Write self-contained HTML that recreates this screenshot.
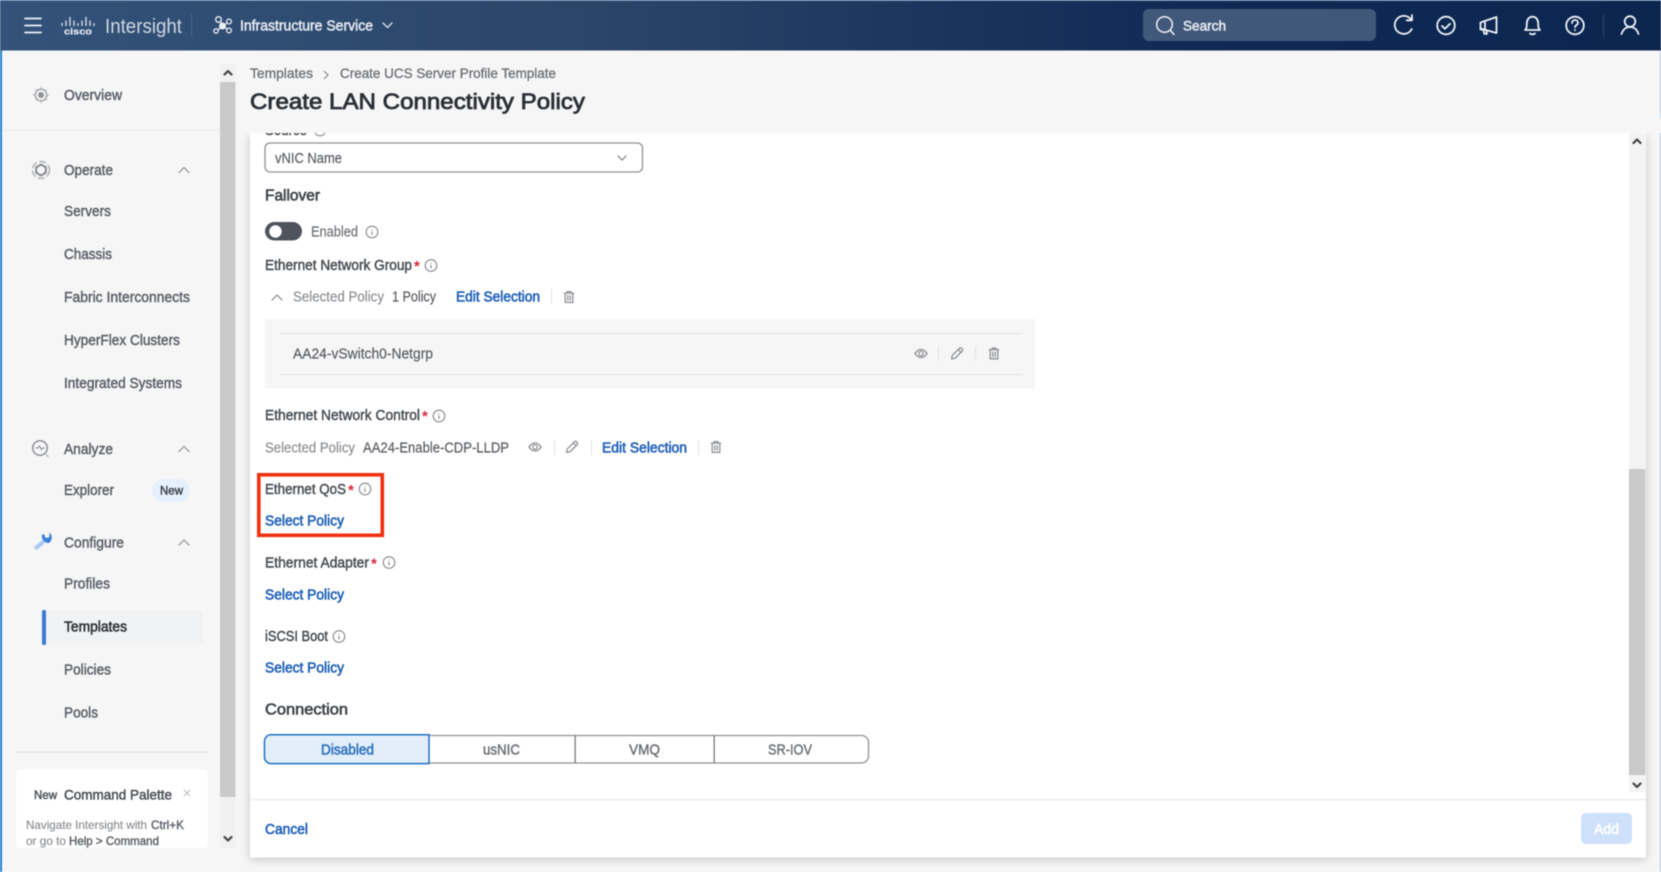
<!DOCTYPE html>
<html lang="en">
<head>
<meta charset="utf-8">
<title>Create LAN Connectivity Policy</title>
<style>
html,body{margin:0;padding:0;background:#f6f6f6;width:1661px;height:872px;overflow:hidden}
svg{display:block;filter:blur(.45px)}
text{font-family:"Liberation Sans",sans-serif;font-size:14.5px;fill:#4d5258;stroke:#4d5258;stroke-width:.45px}
.side{fill:#5b6067;stroke:#5b6067}
.lbl{fill:#474c52;stroke:#474c52}
.mut{fill:#85898e;stroke:#85898e;stroke-width:.12px}
.reg{fill:#55595f;stroke:#55595f;stroke-width:.15px}
.lnk{fill:#1f60b8;stroke:#1f60b8;stroke-width:.6px}
.h{font-size:15.5px;fill:#3d4248;stroke:#3d4248;stroke-width:.6px}
.ic{fill:none;stroke:#85898e;stroke-width:1.2;stroke-linecap:round;stroke-linejoin:round}
.wh{fill:none;stroke:#eef2f7;stroke-width:1.8;stroke-linecap:round;stroke-linejoin:round}
.star{fill:#d8263c;stroke:none;font-size:15px;font-weight:700}
.small{font-size:12px;fill:#85898e;stroke:#85898e;stroke-width:.1px}
.smallb{font-size:12px;fill:#5b6067;stroke:#5b6067;stroke-width:.4px}
</style>
</head>
<body>
<svg xmlns="http://www.w3.org/2000/svg" width="1661" height="872" viewBox="0 0 1661 872">
<defs>
<linearGradient id="hdr" x1="0" x2="1" y1="0" y2="0">
<stop offset="0" stop-color="#34527a"/><stop offset=".35" stop-color="#2a4669"/><stop offset=".72" stop-color="#0f2a55"/><stop offset="1" stop-color="#0c2650"/>
</linearGradient>
<symbol id="info" viewBox="0 0 14 14" overflow="visible">
<circle cx="7" cy="7" r="5.8" fill="none" stroke="#85898e" stroke-width="1.1"/>
<path d="M7 6.2V10M7 4.1v.9" fill="none" stroke="#85898e" stroke-width="1.1"/>
</symbol>
<symbol id="trash" viewBox="0 0 14 14" overflow="visible">
<path class="ic" d="M2.2 3.2h9.6M5 3V1.6h4V3M3.2 3.4v9h7.6v-9M5.8 5.6v4.6M8.2 5.6v4.6"/>
</symbol>
<symbol id="eye" viewBox="0 0 14 14" overflow="visible">
<path class="ic" d="M1 7c2-3 4-4 6-4s4 1 6 4c-2 3-4 4-6 4s-4-1-6-4z"/><circle class="ic" cx="7" cy="7" r="2.2"/>
</symbol>
<symbol id="pen" viewBox="0 0 14 14" overflow="visible">
<path class="ic" d="M1.6 12.4l.6-3.4L9.4 1.8c.6-.6 1.400-.6 2 0l.8.8c.6.6.6 1.400 0 2L5 11.800zM8.200 3l2.800 2.800"/>
</symbol>
</defs>

<!-- page -->
<rect width="1661" height="872" fill="#f6f6f6"/>
<rect x="0" y="50" width="2" height="822" fill="#1f80cf"/>
<rect x="1660" y="50" width="1" height="822" fill="#a9c9e6"/>

<!-- header -->
<rect width="1661" height="50.500" fill="url(#hdr)"/>
<rect width="1661" height="1" fill="#5f7fa6"/>
<path class="wh" stroke-width="2" d="M25 18.500h16M25 25.500h16M25 32.500h16"/>
<g stroke="#dfe6ef" stroke-width="1.300" stroke-linecap="round">
<path d="M62 23.500v2M66 21v4.500M70 17.500v8M74 21v4.500M78 23.500v2M82 21v4.500M86 17.500v8M90 21v4.500M94 23.500v2"/>
</g>
<text x="64" y="34.500" textLength="28" lengthAdjust="spacingAndGlyphs" style="font-size:9.500px;fill:#e3e9f1;stroke:#e3e9f1;stroke-width:.2px;font-weight:700">cisco</text>
<text x="105" y="33" textLength="77" lengthAdjust="spacingAndGlyphs" style="font-size:20.500px;fill:#cfd8e4;stroke:none">Intersight</text>
<rect x="191" y="14" width="1" height="22" fill="#4c6688"/>
<g fill="none" stroke="#eef2f7" stroke-width="1.300">
<path d="M219 20l4 5M229 22l-5 3M229 30l-5-3M217 31l4-4"/>
<circle cx="218.500" cy="19.500" r="2.800" fill="#2f4c70"/><circle cx="229" cy="21.500" r="2.400" fill="#2f4c70"/><circle cx="229" cy="30.500" r="2.400" fill="#2f4c70"/><circle cx="216" cy="31" r="2.200" fill="#2f4c70"/><circle cx="222.500" cy="26" r="2.800" fill="#eef2f7"/>
</g>
<text x="240" y="30.500" textLength="133" lengthAdjust="spacingAndGlyphs" style="font-size:14.500px;fill:#e6ebf2;stroke:#e6ebf2;stroke-width:.5px">Infrastructure Service</text>
<path d="M383 23l4.500 4.500 4.500-4.500" fill="none" stroke="#dfe6ef" stroke-width="1.300" stroke-linecap="round" stroke-linejoin="round"/>

<rect x="1143" y="9" width="233" height="32" rx="6" fill="#42587a"/>
<circle cx="1164.500" cy="24.500" r="7.800" fill="none" stroke="#eef2f7" stroke-width="1.500"/>
<path d="M1170.500 30.500l3.500 4" stroke="#eef2f7" stroke-width="1.500" stroke-linecap="round"/>
<text x="1183" y="30.500" textLength="43" lengthAdjust="spacingAndGlyphs" style="fill:#e6ebf2;stroke:#e6ebf2;stroke-width:.55px;font-size:14px">Search</text>
<!-- refresh -->
<path class="wh" d="M1411 19.500a9 9 0 1 0 .8 9.500M1412 15v5.300h-5.300"/>
<!-- check -->
<circle class="wh" stroke-width="1.500" cx="1446" cy="25.500" r="8.800"/>
<path class="wh" stroke-width="1.600" d="M1442 26l3 2.800 5-5"/>
<!-- megaphone -->
<path class="wh" stroke-width="1.600" d="M1480.500 22.500l16-5.500v16l-16-4.500zM1480.500 22.500v7l3 .3 .8 4h2.700l-.6-3.500"/>
<path class="wh" stroke-width="1.400" d="M1485 22.500v6"/>
<!-- bell -->
<path class="wh" stroke-width="1.600" d="M1525 30c1.800-1.600 1.800-3.500 1.800-6.500 0-3.800 2.200-6.800 5.700-6.800s5.700 3 5.700 6.800c0 3 0 4.900 1.800 6.500zM1530 33.500c1 1.200 4 1.200 5 0"/>
<!-- help -->
<circle class="wh" stroke-width="1.500" cx="1575" cy="25.500" r="8.800"/>
<path class="wh" stroke-width="1.500" d="M1572 23c.2-4 6-4 6 0 0 2-3 2-3 4.200M1575 30v.2"/>
<rect x="1603" y="14" width="1" height="23" fill="#2b4569"/>
<!-- user -->
<circle class="wh" stroke-width="1.700" cx="1630" cy="21.500" r="5.300"/>
<path class="wh" stroke-width="1.700" d="M1621.500 34c1.500-4.500 4.500-7 8.500-7s7 2.500 8.500 7"/>

<!-- sidebar scrollbar -->
<rect x="220" y="64" width="15.500" height="784" fill="#f1f1f1"/>
<rect x="220" y="82" width="15.500" height="715" fill="#c9c9c9"/>
<path d="M224.500 74.500l3.500-3.500 3.500 3.500M224.500 837l3.500 3.500 3.500-3.500" fill="none" stroke="#444" stroke-width="2.200" stroke-linecap="round" stroke-linejoin="round"/>

<!-- sidebar -->
<rect x="2" y="129.500" width="218" height="1.500" fill="#efefef"/>
<g fill="none" stroke="#9a9da1">
<circle cx="41" cy="95" r="3" fill="#8f9297" stroke="none"/><circle cx="41" cy="95" r="5.800" stroke-width="1.300"/>
<path d="M41 87v3M41 100v3M33 95h3M46 95h3M35.500 89.500l2 2M44.500 98.500l2 2M46.500 89.500l-2 2M37.500 98.500l-2 2" stroke-width="1.200" stroke="#b0b3b6"/>
<circle cx="41" cy="170" r="8.500" stroke-width="1.500" stroke-dasharray="7 2.500" stroke="#b0b3b6"/>
<path d="M41 164.500l4.800 2.800v5.400l-4.800 2.800-4.800-2.800v-5.400z" stroke="#85888d" stroke-width="2"/>
<circle cx="40" cy="448" r="7.300" stroke="#85898e" stroke-width="1.400"/>
<path d="M35.500 448h2.500l1.500-2 2 3.500 1-1.500h2.500" stroke="#85898e" stroke-width="1"/>
<path d="M46 454.500l2.500 2.500" stroke="#b5b8bb" stroke-width="1.400"/>
</g>
<path d="M42 534.500a6.800 6.800 0 0 0 7 8.500 6.800 6.800 0 0 0 .5-10.500l-.2 4.700-3.800 .8-1-3.500z" fill="#3b7fdb"/>
<path d="M42.500 542.500l-6 5" stroke="#a9c8f0" stroke-width="4" stroke-linecap="round"/>
<text class="side" x="64" y="100" textLength="58" lengthAdjust="spacingAndGlyphs">Overview</text>
<text class="side" x="64" y="175" textLength="49" lengthAdjust="spacingAndGlyphs">Operate</text>
<text class="side" x="64" y="216" textLength="47" lengthAdjust="spacingAndGlyphs">Servers</text>
<text class="side" x="64" y="259" textLength="48" lengthAdjust="spacingAndGlyphs">Chassis</text>
<text class="side" x="64" y="302" textLength="126" lengthAdjust="spacingAndGlyphs">Fabric Interconnects</text>
<text class="side" x="64" y="345" textLength="116" lengthAdjust="spacingAndGlyphs">HyperFlex Clusters</text>
<text class="side" x="64" y="388" textLength="118" lengthAdjust="spacingAndGlyphs">Integrated Systems</text>
<text class="side" x="64" y="454" textLength="49" lengthAdjust="spacingAndGlyphs">Analyze</text>
<text class="side" x="64" y="495" textLength="50" lengthAdjust="spacingAndGlyphs">Explorer</text>
<text class="side" x="64" y="547.500" textLength="60" lengthAdjust="spacingAndGlyphs">Configure</text>
<text class="side" x="64" y="588.500" textLength="46" lengthAdjust="spacingAndGlyphs">Profiles</text>
<rect x="42" y="610" width="161" height="35" rx="3" fill="#f1f2f4"/>
<rect x="42" y="610" width="4" height="35" rx="1.500" fill="#3b7bd4"/>
<text x="64" y="631.500" textLength="63" lengthAdjust="spacingAndGlyphs" style="fill:#2c3137;stroke:#2c3137;stroke-width:.55px">Templates</text>
<text class="side" x="64" y="674.500" textLength="47" lengthAdjust="spacingAndGlyphs">Policies</text>
<text class="side" x="64" y="717.500" textLength="34" lengthAdjust="spacingAndGlyphs">Pools</text>
<path d="M179 172.500l5-5 5 5M179 451.500l5-5 5 5M179 545l5-5 5 5" fill="none" stroke="#9a9da1" stroke-width="1.300" stroke-linecap="round" stroke-linejoin="round"/>
<rect x="152" y="479" width="38" height="23" rx="11.500" fill="#e6f0fc"/>
<text x="160" y="494.500" textLength="23" lengthAdjust="spacingAndGlyphs" style="font-size:12px;fill:#3e444b;stroke:#3e444b">New</text>
<rect x="16" y="751.500" width="192" height="1.500" fill="#e6e6e6"/>
<rect x="16" y="769" width="192" height="79" rx="4" fill="#fff"/>
<text x="34" y="799" textLength="23" lengthAdjust="spacingAndGlyphs" style="font-size:12px;fill:#4d5258;stroke:#4d5258">New</text>
<text x="64" y="799.500" textLength="108" lengthAdjust="spacingAndGlyphs" style="font-size:14px;fill:#474c52;stroke:#474c52">Command Palette</text>
<path d="M184 790l6 6M190 790l-6 6" stroke="#bbbdc0" stroke-width="1.100"/>
<text class="small" x="26" y="829" textLength="121" lengthAdjust="spacingAndGlyphs">Navigate Intersight with</text>
<text class="smallb" x="151" y="829" textLength="33" lengthAdjust="spacingAndGlyphs">Ctrl+K</text>
<text class="small" x="26" y="845" textLength="40" lengthAdjust="spacingAndGlyphs">or go to</text>
<text class="smallb" x="69" y="845" textLength="90" lengthAdjust="spacingAndGlyphs">Help &gt; Command</text>

<!-- main panel -->
<rect x="250" y="133" width="1396" height="724.500" fill="#fff" style="filter:drop-shadow(0 2px 5px rgba(0,0,0,.2))"/>
<text class="lbl" x="265" y="135" textLength="42" lengthAdjust="spacingAndGlyphs">Source</text>
<use href="#info" x="313" y="123" width="14" height="14"/>
<rect x="238" y="118" width="1425" height="15" fill="#f6f6f6"/>

<!-- breadcrumb + title -->
<text x="250" y="78" textLength="63" lengthAdjust="spacingAndGlyphs" style="fill:#6b6f75;stroke:#6b6f75;stroke-width:.3px;font-size:14px">Templates</text>
<path d="M324 71l4 4-4 4" fill="none" stroke="#85898e" stroke-width="1.200"/>
<text x="340" y="78" textLength="216" lengthAdjust="spacingAndGlyphs" style="fill:#6b6f75;stroke:#6b6f75;stroke-width:.3px;font-size:14px">Create UCS Server Profile Template</text>
<text x="250" y="109" textLength="335" lengthAdjust="spacingAndGlyphs" style="font-size:22.500px;fill:#2b3036;stroke:#2b3036;stroke-width:.8px">Create LAN Connectivity Policy</text>

<!-- panel scrollbar -->
<rect x="1629" y="133" width="16.500" height="659" fill="#f3f3f3"/>
<rect x="1629" y="469" width="16.500" height="306" fill="#c9c9c9"/>
<path d="M1633.500 143l3.500-3.500 3.500 3.500M1633.500 783.500l3.500 3.500 3.500-3.500" fill="none" stroke="#444" stroke-width="2.200" stroke-linecap="round" stroke-linejoin="round"/>

<!-- form -->
<rect x="265" y="143" width="377.500" height="29" rx="5" fill="#fff" stroke="#8d9196" stroke-width="1.300"/>
<text class="reg" x="275" y="163" textLength="67" lengthAdjust="spacingAndGlyphs">vNIC Name</text>
<path d="M618 156l4 4 4-4" fill="none" stroke="#777b80" stroke-width="1.200" stroke-linecap="round" stroke-linejoin="round"/>

<text class="h" x="265" y="200.500" textLength="55" lengthAdjust="spacingAndGlyphs">Fallover</text>
<rect x="265" y="222" width="37" height="18.500" rx="9.250" fill="#4f545c"/>
<circle cx="275.500" cy="231.500" r="6.200" fill="#fff"/>
<text class="reg" x="311" y="236.500" textLength="47" lengthAdjust="spacingAndGlyphs" style="fill:#6b6f75;stroke:#6b6f75">Enabled</text>
<use href="#info" x="365" y="225" width="14" height="14"/>

<text class="lbl" x="265" y="270" textLength="147" lengthAdjust="spacingAndGlyphs">Ethernet Network Group</text>
<text class="star" x="414" y="271">*</text>
<use href="#info" x="424" y="258.500" width="14" height="14"/>

<path d="M272 300l5-5 5 5" fill="none" stroke="#85898e" stroke-width="1.200" stroke-linecap="round" stroke-linejoin="round"/>
<text class="mut" x="293" y="301.500" textLength="91" lengthAdjust="spacingAndGlyphs">Selected Policy</text>
<text class="reg" x="392" y="301.500" textLength="44" lengthAdjust="spacingAndGlyphs">1 Policy</text>
<text class="lnk" x="456" y="301.500" textLength="84" lengthAdjust="spacingAndGlyphs">Edit Selection</text>
<rect x="551" y="289" width="1" height="15" fill="#e2e2e2"/>
<use href="#trash" x="562" y="290" width="14" height="14"/>

<rect x="265" y="319" width="770" height="69.500" fill="#f6f6f6"/>
<rect x="280" y="333" width="742" height="1" fill="#e3e3e3"/>
<rect x="280" y="374" width="742" height="1" fill="#e3e3e3"/>
<text class="reg" x="293" y="358.500" textLength="140" lengthAdjust="spacingAndGlyphs">AA24-vSwitch0-Netgrp</text>
<use href="#eye" x="914" y="346.500" width="14" height="14"/>
<rect x="938" y="346" width="1" height="15" fill="#e2e2e2"/>
<use href="#pen" x="950" y="346.500" width="14" height="14"/>
<rect x="975" y="346" width="1" height="15" fill="#e2e2e2"/>
<use href="#trash" x="987" y="346.500" width="14" height="14"/>

<text class="lbl" x="265" y="420" textLength="155" lengthAdjust="spacingAndGlyphs">Ethernet Network Control</text>
<text class="star" x="422" y="421">*</text>
<use href="#info" x="432" y="409" width="14" height="14"/>
<text class="mut" x="265" y="452.500" textLength="90" lengthAdjust="spacingAndGlyphs">Selected Policy</text>
<text class="reg" x="363" y="452.500" textLength="146" lengthAdjust="spacingAndGlyphs">AA24-Enable-CDP-LLDP</text>
<use href="#eye" x="528" y="440" width="14" height="14"/>
<rect x="554" y="440" width="1" height="15" fill="#e2e2e2"/>
<use href="#pen" x="565" y="440" width="14" height="14"/>
<rect x="591" y="440" width="1" height="15" fill="#e2e2e2"/>
<text class="lnk" x="602" y="452.500" textLength="85" lengthAdjust="spacingAndGlyphs">Edit Selection</text>
<rect x="698" y="440" width="1" height="15" fill="#e2e2e2"/>
<use href="#trash" x="709" y="440" width="14" height="14"/>

<rect x="258.800" y="474.800" width="123.500" height="60.500" fill="none" stroke="#f0300f" stroke-width="3.600"/>
<text class="lbl" x="265" y="494" textLength="81" lengthAdjust="spacingAndGlyphs">Ethernet QoS</text>
<text class="star" x="348" y="495">*</text>
<use href="#info" x="358" y="482" width="14" height="14"/>
<text class="lnk" x="265" y="525.500" textLength="79" lengthAdjust="spacingAndGlyphs">Select Policy</text>

<text class="lbl" x="265" y="567.500" textLength="104" lengthAdjust="spacingAndGlyphs">Ethernet Adapter</text>
<text class="star" x="371" y="568.500">*</text>
<use href="#info" x="382" y="555.500" width="14" height="14"/>
<text class="lnk" x="265" y="599.500" textLength="79" lengthAdjust="spacingAndGlyphs">Select Policy</text>

<text class="lbl" x="265" y="641" textLength="63" lengthAdjust="spacingAndGlyphs">iSCSI Boot</text>
<use href="#info" x="332" y="629.500" width="14" height="14"/>
<text class="lnk" x="265" y="672.500" textLength="79" lengthAdjust="spacingAndGlyphs">Select Policy</text>

<text class="h" x="265" y="714.500" textLength="83" lengthAdjust="spacingAndGlyphs">Connection</text>

<!-- segmented -->
<rect x="264.500" y="735.500" width="604" height="27.500" rx="7" fill="#fff" stroke="#8d9196" stroke-width="1.300"/>
<path d="M271 734.700H429V763.600H271a6.500 6.500 0 0 1-6.500-6.500V741.200a6.500 6.500 0 0 1 6.500-6.500z" fill="#e3eefb" stroke="#1f72c4" stroke-width="1.500"/>
<rect x="574.500" y="735.500" width="1.300" height="27.500" fill="#74787d"/>
<rect x="713.500" y="735.500" width="1.300" height="27.500" fill="#74787d"/>
<text x="321" y="754.500" textLength="53" lengthAdjust="spacingAndGlyphs" style="fill:#2c72bd;stroke:#2c72bd;stroke-width:.55px">Disabled</text>
<text x="483" y="754.500" textLength="37" lengthAdjust="spacingAndGlyphs" style="fill:#6a6e73;stroke:#6a6e73;stroke-width:.4px">usNIC</text>
<text x="629" y="754.500" textLength="31" lengthAdjust="spacingAndGlyphs" style="fill:#6a6e73;stroke:#6a6e73;stroke-width:.4px">VMQ</text>
<text x="768" y="754.500" textLength="44" lengthAdjust="spacingAndGlyphs" style="fill:#6a6e73;stroke:#6a6e73;stroke-width:.4px">SR-IOV</text>

<!-- footer -->
<rect x="250" y="799" width="1396" height="1.500" fill="#ededed"/>
<text class="lnk" x="265" y="834" textLength="43" lengthAdjust="spacingAndGlyphs">Cancel</text>
<rect x="1581" y="813" width="51" height="31" rx="5" fill="#cfe1fa"/>
<text x="1594" y="834" textLength="25" lengthAdjust="spacingAndGlyphs" style="fill:#fff;stroke:#fff;stroke-width:.5px">Add</text>
</svg>
</body>
</html>
